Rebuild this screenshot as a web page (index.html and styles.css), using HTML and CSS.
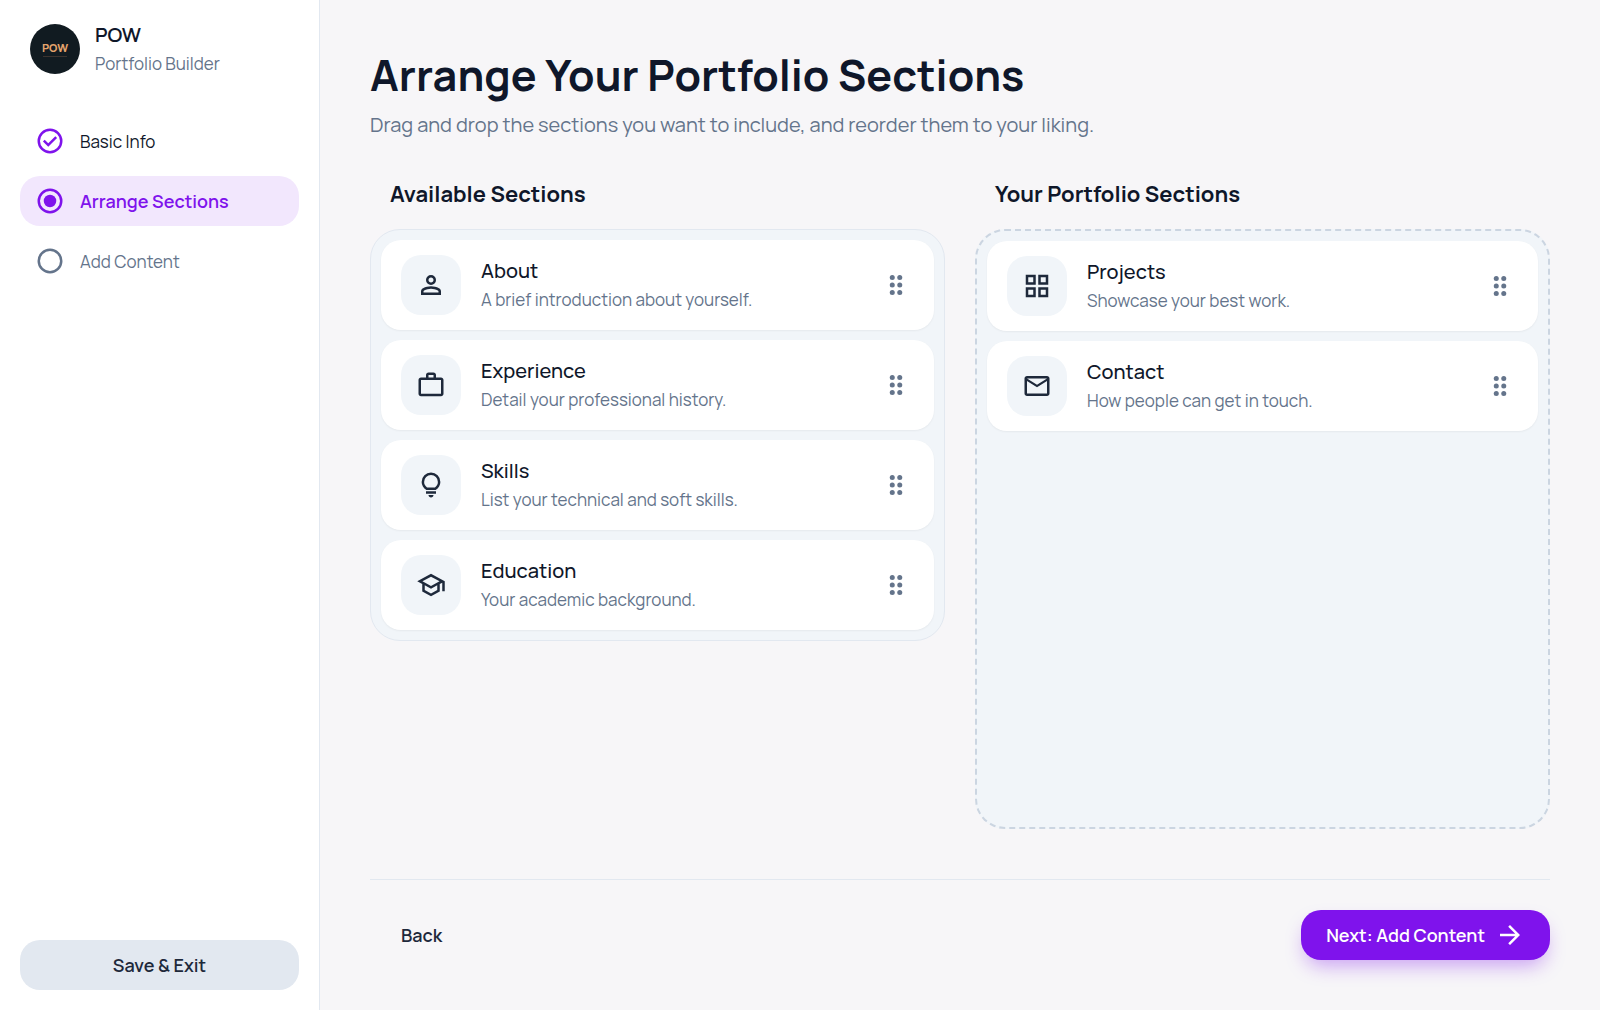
FILE: index.html
```html
<!DOCTYPE html>
<html lang="en">
<head>
<meta charset="utf-8">
<meta name="viewport" content="width=device-width, initial-scale=1">
<title>POW Portfolio Builder</title>
<link rel="stylesheet" href="styles.css">
</head>
<body>
<svg class="sprite" aria-hidden="true">
  <symbol id="i-person" viewBox="0 -960 960 960"><path d="M480-480q-66 0-113-47t-47-113q0-66 47-113t113-47q66 0 113 47t47 113q0 66-47 113t-113 47ZM160-160v-112q0-34 17.500-62.500T224-378q62-31 126-46.500T480-440q66 0 130 15.500T736-378q29 15 46.500 43.500T800-272v112H160Zm80-80h480v-32q0-11-5.500-20T700-306q-54-27-109-40.500T480-360q-56 0-111 13.500T260-306q-9 5-14.500 14t-5.500 20v32Zm240-320q33 0 56.500-23.500T560-640q0-33-23.500-56.500T480-720q-33 0-56.500 23.500T400-640q0 33 23.500 56.500T480-560Z"/></symbol>
  <symbol id="i-work" viewBox="0 0 24 24"><path d="M14 6V4h-4v2h4zM4 8v11h16V8H4zm16-2c1.110 0 2 .89 2 2v11c0 1.110-.89 2-2 2H4c-1.110 0-2-.89-2-2l.01-11c0-1.110.88-2 1.990-2h4V4c0-1.110.89-2 2-2h4c1.110 0 2 .89 2 2v2h4z"/></symbol>
  <symbol id="i-bulb" viewBox="0 -960 960 960"><path d="M480-80q-33 0-56.500-23.500T400-160h160q0 33-23.500 56.500T480-80ZM320-200v-80h320v80H320Zm10-120q-69-41-109.500-110T180-580q0-125 87.500-212.500T480-880q125 0 212.500 87.500T780-580q0 81-40.500 150T630-320H330Zm24-80h252q45-32 69.500-79T700-580q0-92-64-156t-156-64q-92 0-156 64t-64 156q0 54 24.500 101t69.500 79Z"/></symbol>
  <symbol id="i-school" viewBox="0 -960 960 960"><path d="M480-120 200-272v-240L40-600l440-240 440 240v320h-80v-276l-80 44v240L480-120Zm0-332 274-148-274-148-274 148 274 148Zm0 241 200-108v-151L480-360 280-470v151l200 108Z"/></symbol>
  <symbol id="i-grid" viewBox="0 0 24 24"><path fill-rule="evenodd" d="M3 3h8v8H3zM5 5v4h4V5zM13 3h8v8h-8zM15 5v4h4V5zM3 13h8v8H3zM5 15v4h4v-4zM13 13h8v8h-8zM15 15v4h4v-4z"/></symbol>
  <symbol id="i-mail" viewBox="0 -960 960 960"><path d="M160-160q-33 0-56.500-23.500T80-240v-480q0-33 23.500-56.500T160-800h640q33 0 56.500 23.500T880-720v480q0 33-23.500 56.500T800-160H160Zm320-280L160-640v400h640v-400L480-440Zm0-80 320-200H160l320 200Z"/></symbol>
  <symbol id="i-arrow" viewBox="0 -960 960 960"><path d="M647-440H160v-80h487L423-744l57-56 320 320-320 320-57-56 224-224Z"/></symbol>
  <symbol id="i-drag" viewBox="0 0 24 24"><circle cx="9" cy="6" r="2"/><circle cx="15" cy="6" r="2"/><circle cx="9" cy="12" r="2"/><circle cx="15" cy="12" r="2"/><circle cx="9" cy="18" r="2"/><circle cx="15" cy="18" r="2"/></symbol>
  <symbol id="i-ring" viewBox="0 0 24 24"><circle cx="12" cy="12" r="9" fill="none" stroke="currentColor" stroke-width="2"/></symbol>
  <symbol id="i-check" viewBox="0 0 24 24"><circle cx="12" cy="12" r="9" fill="none" stroke="currentColor" stroke-width="2"/><path d="M10.600 16.600l7.050-7.050-1.400-1.400-5.650 5.650-2.850-2.850-1.400 1.400z"/></symbol>
  <symbol id="i-radio" viewBox="0 0 24 24"><circle cx="12" cy="12" r="9" fill="none" stroke="currentColor" stroke-width="2"/><circle cx="12" cy="12" r="5"/></symbol>
</svg>

<div class="app">
  <aside class="sidebar">
    <header class="brand">
      <div class="logo"><span class="logo-name">POW</span><span class="logo-rule"></span></div>
      <div>
        <div class="brand-name">POW</div>
        <div class="brand-sub">Portfolio Builder</div>
      </div>
    </header>
    <nav class="steps" aria-label="Steps">
      <a class="step done" href="#basic"><svg class="icon"><use href="#i-check"/></svg>Basic Info</a>
      <a class="step current" href="#arrange" aria-current="step"><svg class="icon"><use href="#i-radio"/></svg>Arrange Sections</a>
      <a class="step" href="#content"><svg class="icon"><use href="#i-ring"/></svg>Add Content</a>
    </nav>
    <button class="btn btn-save" type="button">Save &amp; Exit</button>
  </aside>

  <main class="main">
    <h1 class="title">Arrange Your Portfolio Sections</h1>
    <p class="subtitle">Drag and drop the sections you want to include, and reorder them to your liking.</p>

    <div class="columns">
      <section>
        <h2 class="heading">Available Sections</h2>
        <ul class="panel">
          <li class="card">
            <span class="tile"><svg class="icon"><use href="#i-person"/></svg></span>
            <div class="info"><h3 class="name">About</h3><p class="desc">A brief introduction about yourself.</p></div>
            <button class="handle" type="button" aria-label="Drag About"><svg class="icon"><use href="#i-drag"/></svg></button>
          </li>
          <li class="card">
            <span class="tile"><svg class="icon"><use href="#i-work"/></svg></span>
            <div class="info"><h3 class="name">Experience</h3><p class="desc">Detail your professional history.</p></div>
            <button class="handle" type="button" aria-label="Drag Experience"><svg class="icon"><use href="#i-drag"/></svg></button>
          </li>
          <li class="card">
            <span class="tile"><svg class="icon"><use href="#i-bulb"/></svg></span>
            <div class="info"><h3 class="name">Skills</h3><p class="desc">List your technical and soft skills.</p></div>
            <button class="handle" type="button" aria-label="Drag Skills"><svg class="icon"><use href="#i-drag"/></svg></button>
          </li>
          <li class="card">
            <span class="tile"><svg class="icon"><use href="#i-school"/></svg></span>
            <div class="info"><h3 class="name">Education</h3><p class="desc">Your academic background.</p></div>
            <button class="handle" type="button" aria-label="Drag Education"><svg class="icon"><use href="#i-drag"/></svg></button>
          </li>
        </ul>
      </section>
      <section>
        <h2 class="heading">Your Portfolio Sections</h2>
        <ul class="panel drop">
          <li class="card">
            <span class="tile"><svg class="icon"><use href="#i-grid"/></svg></span>
            <div class="info"><h3 class="name">Projects</h3><p class="desc">Showcase your best work.</p></div>
            <button class="handle" type="button" aria-label="Drag Projects"><svg class="icon"><use href="#i-drag"/></svg></button>
          </li>
          <li class="card">
            <span class="tile"><svg class="icon"><use href="#i-mail"/></svg></span>
            <div class="info"><h3 class="name">Contact</h3><p class="desc">How people can get in touch.</p></div>
            <button class="handle" type="button" aria-label="Drag Contact"><svg class="icon"><use href="#i-drag"/></svg></button>
          </li>
        </ul>
      </section>
    </div>

    <footer class="actions">
      <button class="btn btn-back" type="button">Back</button>
      <button class="btn btn-next" type="button">Next: Add Content<svg class="icon"><use href="#i-arrow"/></svg></button>
    </footer>
  </main>
</div>
</body>
</html>
```
FILE: styles.css
```css
:root {
  --primary: #7f13ec;
  --ink: #0f172a;
  --muted: #64748b;
  --line: #e2e8f0;
  --soft: #f1f5f9;
}

* { box-sizing: border-box; }

body {
  margin: 0;
  background: #f7f6f8;
  color: var(--ink);
  font-family: Manrope, Inter, "Liberation Sans", sans-serif;
  font-size: 17px;
}

h1, h2, h3, p, ul { margin: 0; padding: 0; }
ul { list-style: none; }
a { text-decoration: none; }
button { border: 0; background: none; font: inherit; cursor: pointer; }

.sprite { display: none; }
.icon { width: 30px; height: 30px; flex: none; fill: currentColor; }

.app {
  display: grid;
  grid-template-columns: 320px minmax(0, 1fr);
  min-height: 100vh;
}

/* Sidebar */
.sidebar {
  display: flex;
  flex-direction: column;
  gap: 38px;
  padding: 20px;
  background: #fff;
  border-right: 1px solid var(--line);
}
.brand { display: flex; align-items: center; gap: 15px; padding: 0 10px; }
.logo {
  display: flex;
  flex-direction: column;
  align-items: center;
  justify-content: center;
  gap: 2px;
  width: 50px;
  height: 50px;
  border-radius: 50%;
  background: #111b21;
}
.logo-name { color: #e3a36c; font-size: 11px; font-weight: 800; line-height: 12px; }
.logo-rule { width: 24px; height: 1px; background: #3b3430; }
.brand-name { font-size: 20px; font-weight: 600; line-height: 30px; }
.brand-sub { color: var(--muted); line-height: 28px; }

.steps { display: flex; flex-direction: column; gap: 10px; }
.step {
  display: flex;
  align-items: center;
  gap: 15px;
  height: 50px;
  padding: 0 15px;
  border-radius: 20px;
  color: var(--muted);
}
.step.done { color: var(--ink); }
.step.done .icon { color: var(--primary); }
.step.current { background: #f2e7fd; color: var(--primary); font-size: 18px; font-weight: 600; }

.btn {
  display: flex;
  align-items: center;
  justify-content: center;
  height: 50px;
  border-radius: 20px;
  font-size: 18px;
  font-weight: 600;
}
.btn-save { margin-top: auto; background: #e2e8f0; color: #1e293b; }

/* Main area */
.main { padding: 50px; }
.title { font-size: 43px; font-weight: 700; line-height: 50px; }
.subtitle { margin-top: 10px; color: var(--muted); font-size: 20px; font-weight: 400; line-height: 30px; }

.columns {
  display: grid;
  grid-template-columns: 1fr 1fr;
  gap: 30px;
  margin-top: 40px;
}
.heading { padding: 0 20px 20px; font-size: 22px; font-weight: 700; line-height: 29px; }
.panel {
  display: flex;
  flex-direction: column;
  gap: 10px;
  padding: 10px;
  border: 1px solid var(--line);
  border-radius: 30px;
  background: var(--soft);
}
.panel.drop { min-height: 600px; border: 2px dashed #cbd5e1; }

.card {
  display: flex;
  align-items: center;
  gap: 20px;
  height: 90px;
  padding: 0 20px;
  border-radius: 20px;
  background: #fff;
  box-shadow: 0 1px 2px rgba(0, 0, 0, 0.05);
}
.tile {
  display: grid;
  place-items: center;
  width: 60px;
  height: 60px;
  border-radius: 20px;
  background: var(--soft);
  color: #1e293b;
}
.info { flex: 1; min-width: 0; }
.name { font-size: 20px; font-weight: 500; line-height: 30px; }
.desc { color: var(--muted); font-weight: 400; line-height: 28px; }
.handle {
  display: grid;
  place-items: center;
  width: 36px;
  height: 36px;
  padding: 0;
  color: var(--muted);
  cursor: grab;
}

.actions {
  display: flex;
  justify-content: space-between;
  margin-top: 50px;
  padding-top: 30px;
  border-top: 1px solid #e2e8f0;
}
.btn-back { padding: 0 31px; color: #1e293b; }
.btn-next {
  gap: 10px;
  padding: 0 25px;
  background: var(--primary);
  color: #fff;
  box-shadow: 0 10px 20px -5px rgba(127, 19, 236, 0.4);
}
```
